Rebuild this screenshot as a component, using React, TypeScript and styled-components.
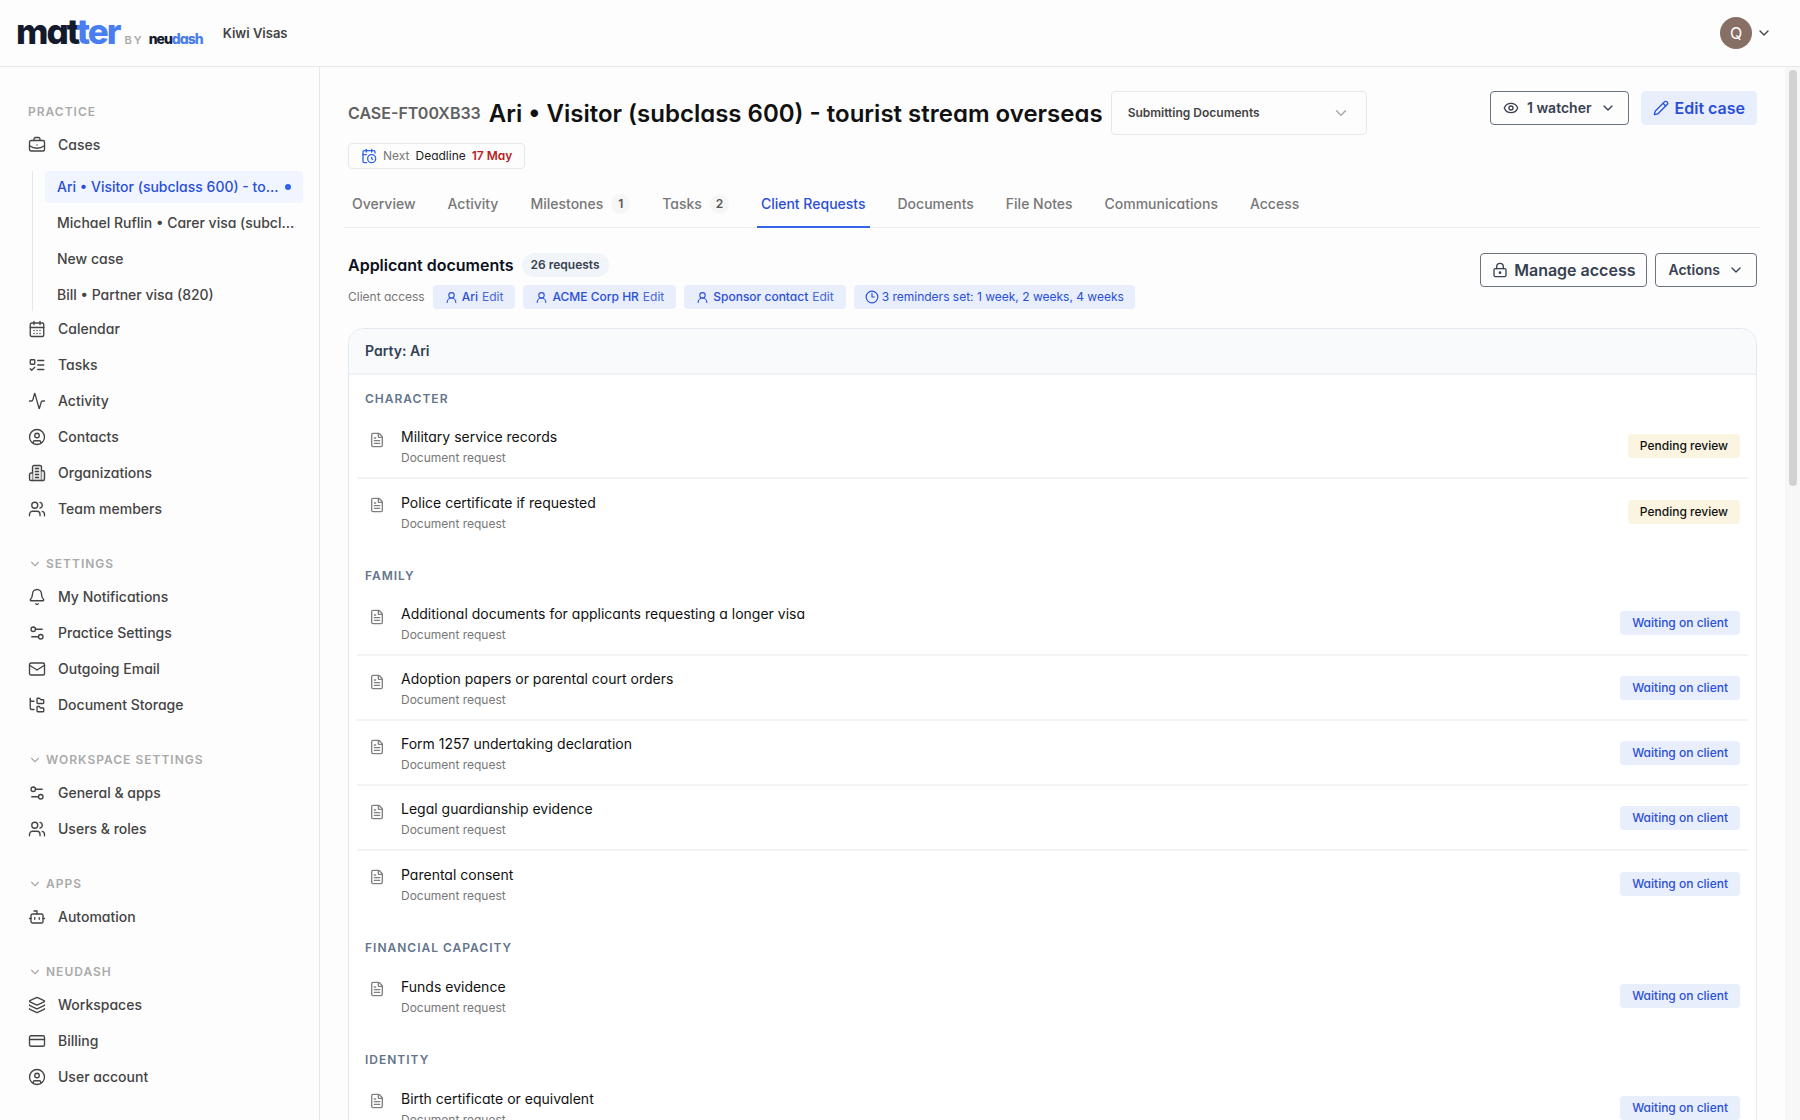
import React from "react";
import styled, { createGlobalStyle, css } from "styled-components";
import {
  Activity, Bell, Bot, BriefcaseBusiness, CalendarClock, CalendarDays, ChevronDown, CircleUser,
  Clock3, CreditCard, Eye, FileText, FolderTree, Layers, LockKeyhole, Mail, Pencil, Settings2,
  UserRound, Users, createLucideIcon, type LucideIcon,
} from "lucide-react";

const Organization = createLucideIcon("organization", [
  ["path", { d: "M6 22V4a2 2 0 0 1 2-2h8a2 2 0 0 1 2 2v18Z", fill: "#e8e8e8", key: "tower" }],
  ["path", { d: "M6 12H4a2 2 0 0 0-2 2v6a2 2 0 0 0 2 2h2", fill: "#e8e8e8", key: "left" }],
  ["path", { d: "M18 9h2a2 2 0 0 1 2 2v9a2 2 0 0 1-2 2h-2", fill: "#e8e8e8", key: "right" }],
  ["path", { d: "M10 6h4M10 10h4M10 14h4M10 18h4", key: "floors" }],
]);

const TaskList = createLucideIcon("task-list", [
  ["rect", { x: "3", y: "5", width: "6", height: "6", rx: "1", key: "box" }],
  ["path", { d: "m3 17 2 2 4-4", key: "check" }],
  ["path", { d: "M13 6h8M13 12h8M13 18h8", key: "lines" }],
]);

const ink = {
  page: "#fdfdfd",
  line: "#e8e8e8",
  text: "#444444",
  muted: "#777777",
  faint: "#aaaaaa",
  blue: "#2a4fd8",
  blueSoft: "#e8eefc",
  slate: "#374151",
};

const GlobalStyle = createGlobalStyle`
  *, *::before, *::after { box-sizing: border-box; }
  body {
    margin: 0;
    background: ${ink.page};
    color: ${ink.text};
    font-family: Inter, "Liberation Sans", sans-serif;
    font-feature-settings: "cv11";
    font-size: 14px;
    line-height: 20px;
    -webkit-font-smoothing: antialiased;
  }
  button, select { font: inherit; font-feature-settings: inherit; color: inherit; cursor: pointer; }
  a { color: inherit; text-decoration: none; }
  h1, h2, h3, p, ul { margin: 0; padding: 0; }
  ul { list-style: none; }
  svg { flex: none; }
`;

const Shell = styled.div`
  display: flex;
  flex-direction: column;
  height: 100vh;
  overflow: hidden;
`;

const TopBar = styled.header`
  display: flex;
  align-items: center;
  flex: none;
  height: 67px;
  padding: 0 28px 0 16px;
  border-bottom: 1px solid ${ink.line};
`;

const Brand = styled.a`
  display: flex;
  align-items: baseline;
  gap: 5px;
  padding-top: 5px;
  line-height: 40px;
`;

const Wordmark = styled.span<{ $size: number }>`
  font-size: ${(p) => p.$size}px;
  font-weight: 800;
  letter-spacing: ${(p) => (p.$size > 20 ? "-2px" : "-1px")};
  color: #121a2c;
  b { font-weight: inherit; color: #4a7df0; }
`;

const By = styled.span`
  font-size: 11px;
  letter-spacing: 2px;
  font-weight: 600;
  color: ${ink.faint};
`;

const Workspace = styled.span`
  margin-left: 20px;
  font-size: 13px;
  font-weight: 600;
  font-feature-settings: normal;
`;

const Account = styled.button`
  display: flex;
  align-items: center;
  gap: 4px;
  margin-left: auto;
  padding: 0;
  border: 0;
  background: none;
`;

const Avatar = styled.span`
  display: grid;
  place-items: center;
  width: 32px;
  height: 32px;
  border-radius: 50%;
  background: #886f65;
  color: #fff;
  font-size: 16px;
`;

const Body = styled.div`
  display: flex;
  flex: 1;
  min-height: 0;
`;

const Sidebar = styled.nav`
  flex: none;
  width: 320px;
  padding: 35px 16px 0 28px;
  border-right: 1px solid ${ink.line};
  overflow: hidden;
`;

const sectionText = css`
  font-size: 12px;
  line-height: 20px;
  font-weight: 600;
  letter-spacing: 1px;
  font-feature-settings: normal;
  text-transform: uppercase;
  color: ${ink.faint};
`;

const SectionTitle = styled.h2`
  ${sectionText}
  margin-bottom: 5px;
`;

const SectionToggle = styled.button`
  display: flex;
  align-items: center;
  gap: 4px;
  margin: 27px 0 5px;
  padding: 0;
  border: 0;
  background: none;
  ${sectionText}
`;

const NavLink = styled.a`
  display: flex;
  align-items: center;
  gap: 12px;
  height: 36px;
  font-weight: 500;
`;

const CaseList = styled.ul`
  display: grid;
  grid-template-columns: minmax(0, 1fr);
  gap: 4px;
  margin: 8px 0 0 4px;
  padding-left: 12px;
  border-left: 1px solid ${ink.line};
`;

const CaseLink = styled.a<{ $active?: boolean }>`
  display: flex;
  align-items: center;
  gap: 4px;
  height: 32px;
  padding: 0 8px 0 12px;
  border-radius: 4px;
  font-weight: 500;
  ${(p) => p.$active && css`background: #f0f5ff; color: ${ink.blue};`}
`;

const Ellipsis = styled.span`
  overflow: hidden;
  white-space: nowrap;
  text-overflow: ellipsis;
`;

const Dot = styled.span`
  flex: none;
  width: 6px;
  height: 6px;
  margin: 0 4px 0 auto;
  border-radius: 50%;
  background: #2f62f0;
`;

const Main = styled.main`
  flex: 1;
  min-width: 0;
  padding: 24px 28px 0;
  overflow: hidden;
`;

const ScrollTrack = styled.div`
  flex: none;
  width: 15px;
  padding: 3px 3px 0 4px;
  background: #f7f7f7;
`;

const ScrollThumb = styled.div`
  height: 416px;
  border-radius: 4px;
  background: #d2d2d2;
`;

const SplitRow = styled.div`
  display: flex;
  justify-content: space-between;
  align-items: flex-start;
`;

const Inline = styled.div<{ $gap: number }>`
  display: flex;
  align-items: center;
  gap: ${(p) => p.$gap}px;
`;

const CaseCode = styled.span`
  font-size: 16px;
  font-weight: 600;
  color: #606060;
`;

const CaseTitle = styled.h1`
  padding-top: 2px;
  font-size: 24px;
  line-height: 32px;
  font-weight: 600;
  color: #111;
  white-space: nowrap;
`;

const StageBox = styled.label`
  display: flex;
  align-items: center;
  width: 256px;
  height: 44px;
  padding-right: 16px;
  border: 1px solid ${ink.line};
  border-radius: 4px;
  color: ${ink.faint};
`;

const StageSelect = styled.select`
  flex: 1;
  align-self: stretch;
  padding: 0 16px;
  border: 0;
  outline: 0;
  appearance: none;
  background: none;
  font-size: 12px;
  font-weight: 600;
  color: ${ink.text};
`;

const Button = styled.button<{ $tone?: "soft"; $large?: boolean }>`
  display: flex;
  align-items: center;
  gap: ${(p) => (p.$large ? 6 : 8)}px;
  height: 34px;
  padding: 0 ${(p) => (p.$large ? 11 : 12)}px;
  border: 1px solid ${(p) => (p.$tone ? ink.blueSoft : "#6b7280")};
  border-radius: 4px;
  background: ${(p) => (p.$tone ? ink.blueSoft : "transparent")};
  color: ${(p) => (p.$tone ? ink.blue : ink.slate)};
  font-size: ${(p) => (p.$large ? 16 : 14)}px;
  font-weight: 600;
  font-feature-settings: normal;
  white-space: nowrap;
`;

const Deadline = styled.a`
  display: flex;
  align-items: center;
  gap: 6px;
  width: fit-content;
  height: 26px;
  margin-top: 8px;
  padding: 0 12px;
  border: 1px solid ${ink.line};
  border-radius: 4px;
  font-size: 12px;
  color: ${ink.muted};
  svg { color: #2f62f0; }
  span { color: #222; }
  time { font-weight: 600; color: #b91c1c; }
`;

const Tabs = styled.nav`
  display: flex;
  gap: 24px;
  height: 59px;
  margin: 0 -4px;
  padding: 0 4px;
  border-bottom: 1px solid #eeeeee;
`;

const Tab = styled.a<{ $active?: boolean }>`
  display: flex;
  align-items: center;
  gap: 8px;
  height: 59px;
  padding: 12px 4px 0;
  border-bottom: 2px solid ${(p) => (p.$active ? "#3563e9" : "transparent")};
  color: ${(p) => (p.$active ? ink.blue : ink.muted)};
  font-weight: 500;
`;

const Count = styled.span`
  min-width: 19px;
  border-radius: 10px;
  background: #f6f6f6;
  text-align: center;
  font-size: 12px;
  font-weight: 600;
  color: #555;
`;

const PanelTitle = styled.h2`
  font-size: 16px;
  line-height: 24px;
  font-weight: 600;
  color: #0b1020;
`;

const Pill = styled.span`
  padding: 2px 9px;
  border-radius: 12px;
  background: #f1f5f9;
  font-size: 12px;
  font-weight: 600;
  color: ${ink.slate};
`;

const PanelHead = styled(SplitRow)`
  margin-top: 25px;
`;

const AccessRow = styled(Inline)`
  margin-top: 8px;
  font-size: 12px;
  color: ${ink.muted};
`;

const Chip = styled.button<{ $plain?: boolean }>`
  display: flex;
  align-items: center;
  gap: ${(p) => (p.$plain ? 3 : 4)}px;
  height: 24px;
  padding: 0 ${(p) => (p.$plain ? 11 : 12)}px;
  border: 0;
  border-radius: 4px;
  background: ${ink.blueSoft};
  color: ${ink.blue};
  font-size: 12px;
  font-weight: ${(p) => (p.$plain ? 400 : 500)};
  white-space: nowrap;
  span { font-weight: 400; opacity: 0.85; }
`;

const Card = styled.section`
  margin-top: 19px;
  border: 1px solid #e2e8f0;
  border-radius: 16px 16px 0 0;
  background: #fff;
  overflow: hidden;
`;

const CardHead = styled.h2`
  padding: 12px 16px;
  border-bottom: 2px solid #eff2f6;
  background: #f9fafc;
  font-size: 14px;
  line-height: 20px;
  font-weight: 600;
  color: #334155;
`;

const Group = styled.section`
  padding: 0 8px 8px;
`;

const GroupTitle = styled.h3`
  padding: 14px 8px 5px;
  font-size: 12px;
  line-height: 20px;
  font-weight: 600;
  letter-spacing: 1px;
  font-feature-settings: normal;
  text-transform: uppercase;
  color: #64748b;
`;

const Request = styled.li`
  display: flex;
  align-items: center;
  gap: 16px;
  height: 65px;
  padding: 0 8px 0 12px;
  color: #808080;
  &:not(:last-child) { border-bottom: 2px solid #f3f3f3; }
  > svg { align-self: flex-start; margin-top: 18px; }
`;

const RequestText = styled.div`
  flex: 1;
  padding-top: 2px;
  font-size: 12px;
  line-height: 20px;
  color: ${ink.muted};
`;

const RequestName = styled.p`
  font-size: 14px;
  line-height: 22px;
  font-weight: 400;
  color: #111;
`;

const Status = styled.span<{ $pending?: boolean }>`
  padding: 2px 12px;
  border-radius: 4px;
  background: ${(p) => (p.$pending ? "#faf4e1" : ink.blueSoft)};
  color: ${(p) => (p.$pending ? "#111" : ink.blue)};
  font-size: 12px;
  line-height: 20px;
  font-weight: 500;
`;

type Item = [LucideIcon, string];

const practice: Item[] = [
  [CalendarDays, "Calendar"], [TaskList, "Tasks"], [Activity, "Activity"],
  [CircleUser, "Contacts"], [Organization, "Organizations"], [Users, "Team members"],
];

const sections: { title: string; items: Item[] }[] = [
  { title: "Settings", items: [[Bell, "My Notifications"], [Settings2, "Practice Settings"], [Mail, "Outgoing Email"], [FolderTree, "Document Storage"]] },
  { title: "Workspace settings", items: [[Settings2, "General & apps"], [Users, "Users & roles"]] },
  { title: "Apps", items: [[Bot, "Automation"]] },
  { title: "Neudash", items: [[Layers, "Workspaces"], [CreditCard, "Billing"], [CircleUser, "User account"]] },
];

const cases = ["Ari • Visitor (subclass 600) - tourist stream overseas", "Michael Ruflin • Carer visa (subclass 836)", "New case", "Bill • Partner visa (820)"];

const tabs: { label: string; count?: number }[] = [
  { label: "Overview" }, { label: "Activity" }, { label: "Milestones", count: 1 }, { label: "Tasks", count: 2 },
  { label: "Client Requests" }, { label: "Documents" }, { label: "File Notes" }, { label: "Communications" }, { label: "Access" },
];

const groups: { title: string; pending?: boolean; items: string[] }[] = [
  { title: "Character", pending: true, items: ["Military service records", "Police certificate if requested"] },
  {
    title: "Family",
    items: [
      "Additional documents for applicants requesting a longer visa", "Adoption papers or parental court orders",
      "Form 1257 undertaking declaration", "Legal guardianship evidence", "Parental consent",
    ],
  },
  { title: "Financial capacity", items: ["Funds evidence"] },
  { title: "Identity", items: ["Birth certificate or equivalent"] },
];

const NavItem = ({ icon: Icon, label }: { icon: LucideIcon; label: string }) => (
  <NavLink href="#">
    <Icon size={18} strokeWidth={1.8} />
    {label}
  </NavLink>
);

export default function App() {
  return (
    <Shell>
      <GlobalStyle />
      <TopBar>
        <Brand href="#">
          <Wordmark $size={35}>mat<b>ter</b></Wordmark>
          <By>BY</By>
          <Wordmark $size={14}>neu<b>dash</b></Wordmark>
        </Brand>
        <Workspace>Kiwi Visas</Workspace>
        <Account aria-label="Account menu">
          <Avatar>Q</Avatar>
          <ChevronDown size={16} strokeWidth={2} />
        </Account>
      </TopBar>
      <Body>
        <Sidebar>
          <SectionTitle>Practice</SectionTitle>
          <NavItem icon={BriefcaseBusiness} label="Cases" />
          <CaseList>
            {cases.map((name, i) => (
              <li key={name}>
                <CaseLink href="#" $active={i === 0}>
                  <Ellipsis>{name}</Ellipsis>
                  {i === 0 && <Dot />}
                </CaseLink>
              </li>
            ))}
          </CaseList>
          {practice.map(([icon, label]) => <NavItem key={label} icon={icon} label={label} />)}
          {sections.map((s) => (
            <React.Fragment key={s.title}>
              <SectionToggle>
                <ChevronDown size={14} strokeWidth={2} />
                {s.title}
              </SectionToggle>
              {s.items.map(([icon, label]) => <NavItem key={label} icon={icon} label={label} />)}
            </React.Fragment>
          ))}
        </Sidebar>
        <Main>
          <SplitRow>
            <Inline $gap={8}>
              <CaseCode>CASE-FT00XB33</CaseCode>
              <CaseTitle>Ari • Visitor (subclass 600) - tourist stream overseas</CaseTitle>
              <StageBox>
                <StageSelect aria-label="Case stage">
                  <option>Submitting Documents</option>
                </StageSelect>
                <ChevronDown size={18} strokeWidth={2} />
              </StageBox>
            </Inline>
            <Inline $gap={12}>
              <Button>
                <Eye size={16} strokeWidth={2} />
                1 watcher
                <ChevronDown size={16} strokeWidth={2} />
              </Button>
              <Button $tone="soft" $large>
                <Pencil size={16} strokeWidth={2} />
                Edit case
              </Button>
            </Inline>
          </SplitRow>
          <Deadline href="#">
            <CalendarClock size={16} strokeWidth={2} />
            Next <span>Deadline</span> <time>17 May</time>
          </Deadline>
          <Tabs>
            {tabs.map((t) => (
              <Tab key={t.label} href="#" $active={t.label === "Client Requests"}>
                {t.label}
                {t.count && <Count>{t.count}</Count>}
              </Tab>
            ))}
          </Tabs>
          <PanelHead>
            <div>
              <Inline $gap={8}>
                <PanelTitle>Applicant documents</PanelTitle>
                <Pill>26 requests</Pill>
              </Inline>
              <AccessRow $gap={8}>
                Client access
                {["Ari", "ACME Corp HR", "Sponsor contact"].map((who) => (
                  <Chip key={who}>
                    <UserRound size={13} strokeWidth={2} />
                    {who} <span>Edit</span>
                  </Chip>
                ))}
                <Chip $plain>
                  <Clock3 size={14} strokeWidth={2} />
                  3 reminders set: 1 week, 2 weeks, 4 weeks
                </Chip>
              </AccessRow>
            </div>
            <Inline $gap={8}>
              <Button $large>
                <LockKeyhole size={16} strokeWidth={2} />
                Manage access
              </Button>
              <Button>
                Actions
                <ChevronDown size={16} strokeWidth={2} />
              </Button>
            </Inline>
          </PanelHead>
          <Card>
            <CardHead>Party: Ari</CardHead>
            {groups.map((g) => (
              <Group key={g.title}>
                <GroupTitle>{g.title}</GroupTitle>
                <ul>
                  {g.items.map((name) => (
                    <Request key={name}>
                      <FileText size={16} strokeWidth={2} />
                      <RequestText>
                        <RequestName>{name}</RequestName>
                        Document request
                      </RequestText>
                      <Status $pending={g.pending}>{g.pending ? "Pending review" : "Waiting on client"}</Status>
                    </Request>
                  ))}
                </ul>
              </Group>
            ))}
          </Card>
        </Main>
        <ScrollTrack>
          <ScrollThumb />
        </ScrollTrack>
      </Body>
    </Shell>
  );
}
